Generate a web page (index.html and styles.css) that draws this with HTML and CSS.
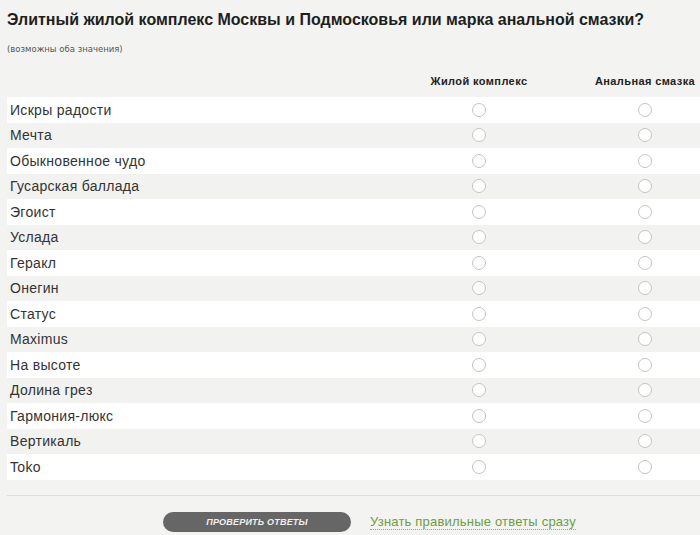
FILE: index.html
```html
<!DOCTYPE html>
<html lang="ru">
<head>
<meta charset="utf-8">
<link rel="stylesheet" href="styles.css">
</head>
<body>
<div class="page">
  <h1 class="title">Элитный жилой комплекс Москвы и Подмосковья или марка анальной смазки?</h1>
  <p class="hint">(возможны оба значения)</p>
  <div class="table">
    <div class="head">
      <span></span>
      <span class="col-title">Жилой комплекс</span>
      <span class="col-title">Анальная смазка</span>
    </div>
    <div class="row"><span class="label">Искры радости</span><span class="cell"><i class="radio"></i></span><span class="cell"><i class="radio"></i></span></div>
    <div class="row"><span class="label">Мечта</span><span class="cell"><i class="radio"></i></span><span class="cell"><i class="radio"></i></span></div>
    <div class="row"><span class="label">Обыкновенное чудо</span><span class="cell"><i class="radio"></i></span><span class="cell"><i class="radio"></i></span></div>
    <div class="row"><span class="label">Гусарская баллада</span><span class="cell"><i class="radio"></i></span><span class="cell"><i class="radio"></i></span></div>
    <div class="row"><span class="label">Эгоист</span><span class="cell"><i class="radio"></i></span><span class="cell"><i class="radio"></i></span></div>
    <div class="row"><span class="label">Услада</span><span class="cell"><i class="radio"></i></span><span class="cell"><i class="radio"></i></span></div>
    <div class="row"><span class="label">Геракл</span><span class="cell"><i class="radio"></i></span><span class="cell"><i class="radio"></i></span></div>
    <div class="row"><span class="label">Онегин</span><span class="cell"><i class="radio"></i></span><span class="cell"><i class="radio"></i></span></div>
    <div class="row"><span class="label">Статус</span><span class="cell"><i class="radio"></i></span><span class="cell"><i class="radio"></i></span></div>
    <div class="row"><span class="label">Maximus</span><span class="cell"><i class="radio"></i></span><span class="cell"><i class="radio"></i></span></div>
    <div class="row"><span class="label">На высоте</span><span class="cell"><i class="radio"></i></span><span class="cell"><i class="radio"></i></span></div>
    <div class="row"><span class="label">Долина грез</span><span class="cell"><i class="radio"></i></span><span class="cell"><i class="radio"></i></span></div>
    <div class="row"><span class="label">Гармония-люкс</span><span class="cell"><i class="radio"></i></span><span class="cell"><i class="radio"></i></span></div>
    <div class="row"><span class="label">Вертикаль</span><span class="cell"><i class="radio"></i></span><span class="cell"><i class="radio"></i></span></div>
    <div class="row"><span class="label">Toko</span><span class="cell"><i class="radio"></i></span><span class="cell"><i class="radio"></i></span></div>
  </div>
  <div class="footer">
    <button class="check">ПРОВЕРИТЬ ОТВЕТЫ</button>
    <a class="reveal" href="#">Узнать правильные ответы сразу</a>
  </div>
</div>
</body>
</html>
```
FILE: styles.css
```css
html, body {
  margin: 0;
  padding: 0;
  background: #f3f3f1;
}
body {
  font-family: "Liberation Sans", Arial, sans-serif;
  color: #2b2b2b;
}
.page {
  width: 693px;
  padding: 10px 0 0 7px;
}
.title {
  margin: 0;
  font-size: 16px;
  line-height: 19px;
  font-weight: bold;
  color: #1e1e1e;
  letter-spacing: 0;
}
.hint {
  margin: 14px 0 0 0;
  font-family: "DejaVu Sans", sans-serif;
  font-size: 8.5px;
  line-height: 12px;
  color: #555;
}
.table {
  margin-top: 20px;
}
.head,
.row {
  display: grid;
  grid-template-columns: 1fr 110px 110px;
  column-gap: 56px;
  align-items: center;
}
.head {
  height: 22px;
  align-items: start;
  line-height: 13px;
}
.col-title {
  text-align: center;
  font-size: 11px;
  font-weight: bold;
  color: #222;
  letter-spacing: 0.4px;
  white-space: nowrap;
}
.row {
  height: 25.5px;
  background: #ffffff;
}
.row:nth-child(odd) {
  background: #f2f2f0;
}
.label {
  padding-left: 3px;
  font-size: 14px;
  letter-spacing: 0.3px;
  color: #333;
}
.cell {
  display: flex;
  justify-content: center;
}
.radio {
  display: block;
  width: 12px;
  height: 12px;
  border: 1px solid #c4c4c4;
  border-radius: 50%;
  background: #fff;
}
.footer {
  margin-top: 15px;
  border-top: 1px solid #dcdcdc;
  padding: 16px 0 0 156px;
  display: flex;
  align-items: center;
  gap: 19px;
}
.check {
  width: 188px;
  height: 20px;
  border: none;
  border-radius: 10px;
  background: #666666;
  color: #f0f0f0;
  font-family: "Liberation Sans", Arial, sans-serif;
  font-size: 9px;
  font-weight: bold;
  font-style: italic;
  letter-spacing: 0.2px;
  padding: 0;
}
.reveal {
  font-size: 13px;
  letter-spacing: 0.2px;
  color: #6f9d3f;
  text-decoration: none;
  border-bottom: 1px dotted #8ab463;
  line-height: 15px;
}
```
